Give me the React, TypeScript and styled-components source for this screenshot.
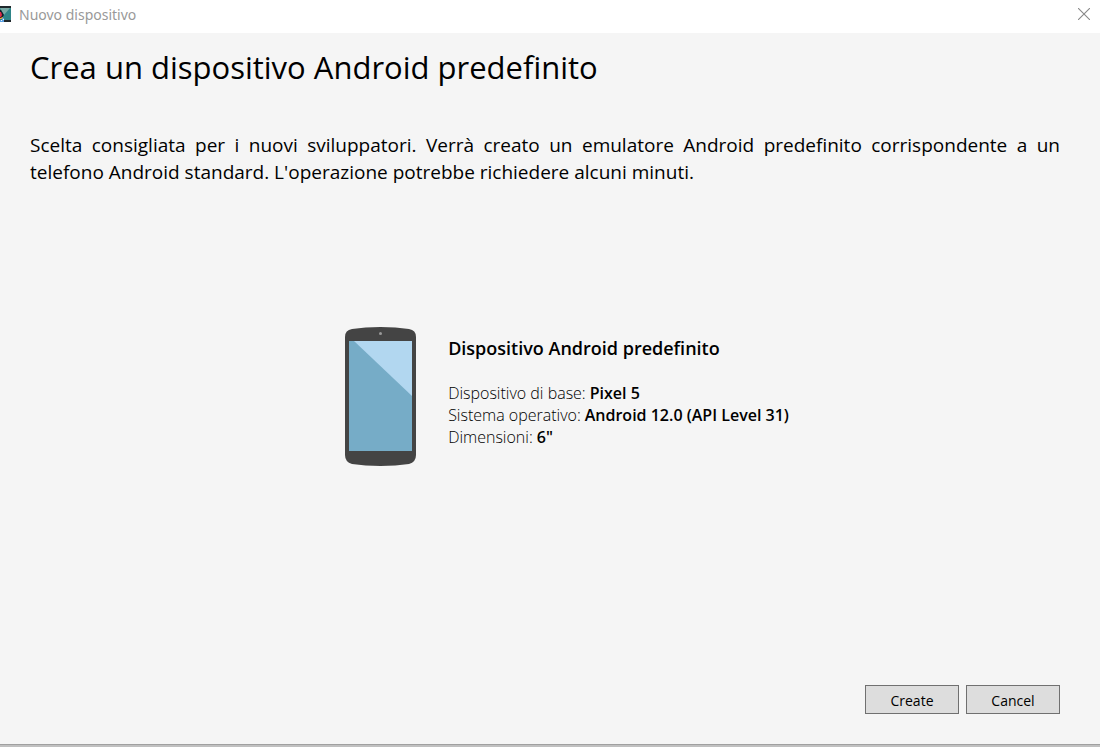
import React from "react";
import styled, { createGlobalStyle } from "styled-components";

const GlobalStyle = createGlobalStyle`
  *, *::before, *::after { box-sizing: border-box; }
  body {
    margin: 0;
    background: #f5f5f5;
    color: #000;
    font-family: "Segoe UI", "Open Sans", "Noto Sans", sans-serif;
  }
`;

const Window = styled.div`
  display: flex;
  flex-direction: column;
  min-height: 100vh;
  border-bottom: 2px solid #c0c0c0;
`;

const TitleBar = styled.header`
  display: flex;
  align-items: center;
  height: 33px;
  padding: 0 8px 4px 0;
  background: #fff;
`;

const WindowTitle = styled.span`
  flex: 1;
  padding-left: 7px;
  color: #999;
  font-family: "Segoe UI", "Noto Sans", sans-serif;
  font-size: 14px;
  line-height: 20px;
`;

const CloseButton = styled.button`
  display: flex;
  padding: 1px 2px 3px;
  border: 0;
  background: none;
`;

const Dialog = styled.main`
  display: flex;
  flex: 1;
  flex-direction: column;
  padding: 12px 40px 30px 30px;
  border-bottom: 1px solid #a0a0a0;
`;

const Heading = styled.h1`
  margin: 0;
  font-size: 31px;
  font-weight: 400;
  line-height: 44px;
`;

const Intro = styled.p`
  margin: 43px 0 0;
  font-size: 19px;
  line-height: 27px;
  text-align: justify;
`;

const Preview = styled.section`
  display: flex;
  flex: 1;
  align-items: center;
  justify-content: center;
  gap: 32px;
  padding: 0 0 79px 44px;
`;

const DeviceInfo = styled.div`
  padding-bottom: 8px;
`;

const DeviceName = styled.h2`
  margin: 0 0 22px;
  font-size: 18px;
  font-weight: 600;
  line-height: 24px;
`;

const Specs = styled.dl`
  margin: 0;
  font-size: 16px;
  line-height: 22px;
`;

const Spec = styled.div`
  display: flex;
  gap: 4px;
`;

const SpecLabel = styled.dt`
  margin: 0;
  font-weight: 300;
`;

const SpecValue = styled.dd`
  margin: 0;
  font-weight: 600;
`;

const Actions = styled.footer`
  display: flex;
  justify-content: flex-end;
  gap: 7px;
`;

const ActionButton = styled.button`
  width: 94px;
  height: 29px;
  padding: 2px 0 0;
  border: 1px solid #707070;
  background: #ddd;
  color: #000;
  font-family: inherit;
  font-size: 14px;
  line-height: 20px;
`;

const specs = [
  { label: "Dispositivo di base:", value: "Pixel 5" },
  { label: "Sistema operativo:", value: "Android 12.0 (API Level 31)" },
  { label: "Dimensioni:", value: '6"' },
];

function AppIcon() {
  return (
    <svg width="12" height="17" viewBox="0 0 12 17" aria-hidden="true">
      <path d="M0 0h11v16H0z" fill="#20282c" />
      <path d="M0 2h11v12H0z" fill="#2f8588" />
      <path d="M0 2h10L4 9z" fill="#78aaa5" />
      <path d="M0 4h1l3 5-2 3H0z" fill="#17202b" />
      <path d="M0 6h1l1 3-1 2H0z" fill="#e12d4b" />
      <path d="M0 12l3-1v2H0z" fill="#e8a33d" />
      <path d="M0 14h2v-2h2v4H0z" fill="#5b9fe0" />
      <path d="M1 14h1v1H1zM3 13h1v1H3z" fill="#e8f2fa" />
    </svg>
  );
}

function CloseIcon() {
  return (
    <svg width="12" height="12" viewBox="0 0 12 12" aria-hidden="true">
      <path d="M0 0l12 12M12 0L0 12" stroke="#888" strokeWidth="1.1" />
    </svg>
  );
}

function PhoneIllustration() {
  return (
    <svg width="71" height="139" viewBox="0 0 71 139" aria-hidden="true">
      <path
        d="M0 10Q0 3 7 2Q20 0 35.500 0Q51 0 64 2Q71 3 71 10V128Q71 135 64 137Q51 139 35.500 139Q20 139 7 137Q0 135 0 128Z"
        fill="#444"
      />
      <path d="M4 14h63v110H4z" fill="#76acc7" />
      <path d="M9 14h58v55z" fill="#b2d7f0" />
      <circle cx="35.500" cy="6.500" r="1.500" fill="#999" />
    </svg>
  );
}

export default function App() {
  return (
    <>
      <GlobalStyle />
      <Window>
        <TitleBar>
          <AppIcon />
          <WindowTitle>Nuovo dispositivo</WindowTitle>
          <CloseButton type="button" aria-label="Chiudi">
            <CloseIcon />
          </CloseButton>
        </TitleBar>
        <Dialog>
          <Heading>Crea un dispositivo Android predefinito</Heading>
          <Intro>
            Scelta consigliata per i nuovi sviluppatori. Verrà creato un emulatore Android
            predefinito corrispondente a un telefono Android standard. L'operazione potrebbe
            richiedere alcuni minuti.
          </Intro>
          <Preview>
            <PhoneIllustration />
            <DeviceInfo>
              <DeviceName>Dispositivo Android predefinito</DeviceName>
              <Specs>
                {specs.map(({ label, value }) => (
                  <Spec key={label}>
                    <SpecLabel>{label}</SpecLabel>
                    <SpecValue>{value}</SpecValue>
                  </Spec>
                ))}
              </Specs>
            </DeviceInfo>
          </Preview>
          <Actions>
            <ActionButton type="button">Create</ActionButton>
            <ActionButton type="button">Cancel</ActionButton>
          </Actions>
        </Dialog>
      </Window>
    </>
  );
}
